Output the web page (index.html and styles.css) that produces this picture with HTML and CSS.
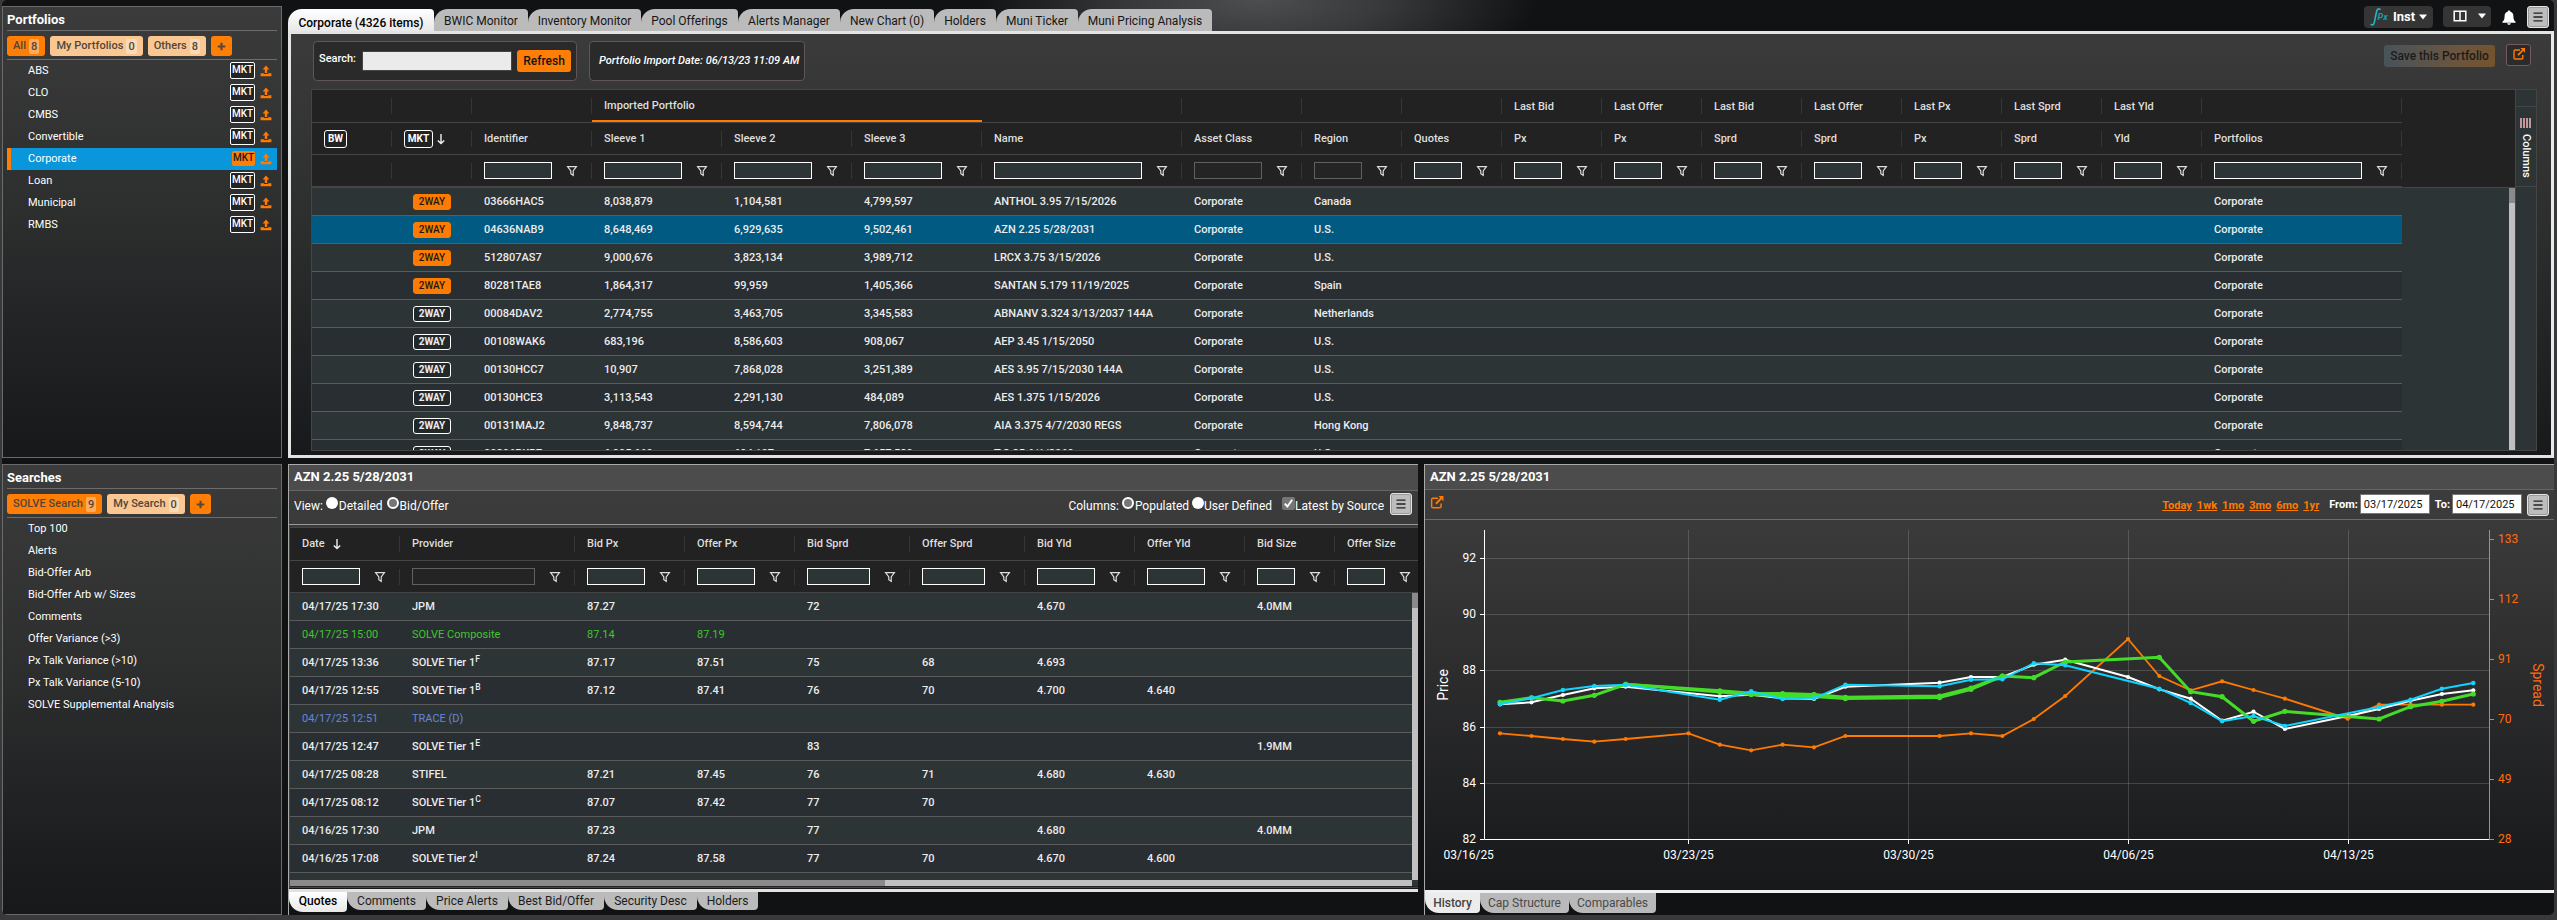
FILE: index.html
```html
<!DOCTYPE html>
<html lang="en">
<head>
<meta charset="utf-8">
<title>Portfolios</title>
<link rel="stylesheet" href="styles.css">
</head>
<body>
<svg class="defs" width="0" height="0">
  <symbol id="funnel" viewBox="0 0 12 12"><path d="M1.6 1.7h8.8L7.2 6v4.4L4.8 8.700V6z" fill="none" stroke="#ddd" stroke-width="1.2"/></symbol>
  <symbol id="upload" viewBox="0 0 12 12"><path d="M6 .6 9.4 4.4H7.2V8H4.8V4.4H2.6z" fill="#ff7a00"/><path d="M.6 8.2h3.3v.9h4.2v-.9h3.3v3H.6z" fill="#ff7a00"/></symbol>
  <symbol id="plus" viewBox="0 0 10 10"><path d="M5 .8v8.4M.8 5h8.4" stroke="#55483a" stroke-width="2.4"/></symbol>
  <symbol id="popout" viewBox="0 0 14 14"><path d="M8 3H3.2Q2 3 2 4.2v6.6Q2 12 3.2 12h6.4q1.2 0 1.2-1.2V8" fill="none" stroke="#ff7a00" stroke-width="1.4"/><path d="M6 8.2 11 3" stroke="#ff7a00" stroke-width="1.8"/><path d="M8.4 1H13v4.8z" fill="#ff7a00"/></symbol>
  <symbol id="lines" viewBox="0 0 22 22"><path d="M6 6.7h10M6 11h10M6 15.3h10" stroke="#222" stroke-width="1.4"/></symbol>
  <symbol id="down" viewBox="0 0 10 12"><path d="M5 1v9.5M1.8 7.4 5 10.6l3.2-3.2" fill="none" stroke="#eee" stroke-width="1.4"/></symbol>
</svg>
<div class="app">
  <aside class="side">
    <section class="box box-top">
      <h2>Portfolios</h2>
      <div class="pills">
        <button class="pill on">All <b>8</b></button><button class="pill">My Portfolios <b>0</b></button><button class="pill">Others <b>8</b></button><button class="pill on add"><svg width="9" height="9"><use href="#plus"/></svg></button>
      </div>
      <ul class="list">
        <li>ABS<span class="mkt">MKT</span><svg width="12" height="12"><use href="#upload"/></svg></li>
        <li>CLO<span class="mkt">MKT</span><svg width="12" height="12"><use href="#upload"/></svg></li>
        <li>CMBS<span class="mkt">MKT</span><svg width="12" height="12"><use href="#upload"/></svg></li>
        <li>Convertible<span class="mkt">MKT</span><svg width="12" height="12"><use href="#upload"/></svg></li>
        <li class="sel">Corporate<span class="mkt">MKT</span><svg width="12" height="12"><use href="#upload"/></svg></li>
        <li>Loan<span class="mkt">MKT</span><svg width="12" height="12"><use href="#upload"/></svg></li>
        <li>Municipal<span class="mkt">MKT</span><svg width="12" height="12"><use href="#upload"/></svg></li>
        <li>RMBS<span class="mkt">MKT</span><svg width="12" height="12"><use href="#upload"/></svg></li>
      </ul>
    </section>
    <section class="box box-bottom">
      <h2>Searches</h2>
      <div class="pills">
        <button class="pill on">SOLVE Search <b>9</b></button><button class="pill">My Search <b>0</b></button><button class="pill on add"><svg width="9" height="9"><use href="#plus"/></svg></button>
      </div>
      <ul class="list">
        <li>Top 100</li><li>Alerts</li><li>Bid-Offer Arb</li><li>Bid-Offer Arb w/ Sizes</li><li>Comments</li><li>Offer Variance (&gt;3)</li><li>Px Talk Variance (&gt;10)</li><li>Px Talk Variance (5-10)</li><li>SOLVE Supplemental Analysis</li>
      </ul>
    </section>
  </aside>
  <main class="main">
    <header class="topbar">
      <nav class="tabs">
        <a class="tab on w146">Corporate (4326 items)</a><a class="tab w94">BWIC Monitor</a><a class="tab w113">Inventory Monitor</a><a class="tab w97">Pool Offerings</a><a class="tab w102">Alerts Manager</a><a class="tab w94">New Chart (0)</a><a class="tab w62">Holders</a><a class="tab w82">Muni Ticker</a><a class="tab w134">Muni Pricing Analysis</a>
      </nav>
      <div class="tools">
        <div class="tool inst">
          <svg width="20" height="22" viewBox="0 0 20 22"><path d="M1.2 18.6c2 .9 2.9-.4 3.4-3.4L6.400 6.200C6.900 3.300 8 2.300 10 3.200" fill="none" stroke="#27b5c4" stroke-width="1.6" stroke-linecap="round"/><text x="7.500" y="14" class="px">Px</text></svg>
          <span>Inst</span>
          <svg width="8" height="6" viewBox="0 0 8 6"><path d="M0 .5h8L4 5.500z" fill="#fff"/></svg>
        </div>
        <div class="tool layout">
          <svg width="14" height="12" viewBox="0 0 14 12"><path d="M1.200 1.200h11.600v9.600H1.200zM7 1v10" fill="none" stroke="#fff" stroke-width="1.500"/></svg>
          <svg width="8" height="6" viewBox="0 0 8 6"><path d="M0 .5h8L4 5.500z" fill="#fff"/></svg>
        </div>
        <svg class="bell" width="14" height="15" viewBox="0 0 14 15"><path d="M7 .4c.8 0 1.200.5 1.200 1.200 2.200.6 3.200 2.300 3.200 4.600 0 3 .8 4.400 2.200 5.600v1H.4v-1c1.400-1.200 2.200-2.600 2.200-5.600 0-2.300 1-4 3.200-4.600C5.800.9 6.200.4 7 .4zM5.200 13.300h3.600c-.2 1-.9 1.500-1.800 1.500s-1.600-.5-1.800-1.500z" fill="#fff"/></svg>
        <button class="menu"><svg width="20" height="20"><use href="#lines"/></svg></button>
      </div>
    </header>
    <section class="port">
      <div class="bar">
        <div class="search"><label>Search:</label><input type="text" aria-label="Search"><button>Refresh</button></div>
        <div class="import">Portfolio Import Date: 06/13/23 11:09 AM</div>
        <button class="save">Save this Portfolio</button>
        <button class="pop"><svg width="14" height="14"><use href="#popout"/></svg></button>
      </div>
      <div class="grid">
        <div class="gmain">
          <div class="ghead">
            <div class="hr hr1 pc"><span></span><span></span><span></span><span class="group">Imported Portfolio</span><span></span><span></span><span></span><span></span><span>Last Bid</span><span>Last Offer</span><span>Last Bid</span><span>Last Offer</span><span>Last Px</span><span>Last Sprd</span><span>Last Yld</span><span></span></div>
            <div class="hr pc"><span><i class="chip bw">BW</i></span><span><i class="chip">MKT</i><svg class="arrow" width="10" height="12"><use href="#down"/></svg></span><span>Identifier</span><span>Sleeve 1</span><span>Sleeve 2</span><span>Sleeve 3</span><span>Name</span><span>Asset Class</span><span>Region</span><span>Quotes</span><span>Px</span><span>Px</span><span>Sprd</span><span>Sprd</span><span>Px</span><span>Sprd</span><span>Yld</span><span>Portfolios</span></div>
            <div class="hr pc"><span></span><span></span><span><i class="in"></i><svg width="12" height="12"><use href="#funnel"/></svg></span><span><i class="in"></i><svg width="12" height="12"><use href="#funnel"/></svg></span><span><i class="in"></i><svg width="12" height="12"><use href="#funnel"/></svg></span><span><i class="in"></i><svg width="12" height="12"><use href="#funnel"/></svg></span><span><i class="in"></i><svg width="12" height="12"><use href="#funnel"/></svg></span><span><i class="in off"></i><svg width="12" height="12"><use href="#funnel"/></svg></span><span><i class="in off"></i><svg width="12" height="12"><use href="#funnel"/></svg></span><span><i class="in"></i><svg width="12" height="12"><use href="#funnel"/></svg></span><span><i class="in"></i><svg width="12" height="12"><use href="#funnel"/></svg></span><span><i class="in"></i><svg width="12" height="12"><use href="#funnel"/></svg></span><span><i class="in"></i><svg width="12" height="12"><use href="#funnel"/></svg></span><span><i class="in"></i><svg width="12" height="12"><use href="#funnel"/></svg></span><span><i class="in"></i><svg width="12" height="12"><use href="#funnel"/></svg></span><span><i class="in"></i><svg width="12" height="12"><use href="#funnel"/></svg></span><span><i class="in"></i><svg width="12" height="12"><use href="#funnel"/></svg></span><span><i class="in"></i><svg width="12" height="12"><use href="#funnel"/></svg></span></div>
          </div>
          <div class="gbody">
            <div class="rows">
              <div class="row pc"><span class="way hot"><i>2WAY</i></span><span>03666HAC5</span><span>8,038,879</span><span>1,104,581</span><span>4,799,597</span><span>ANTHOL 3.95 7/15/2026</span><span>Corporate</span><span>Canada</span><span class="last">Corporate</span></div>
              <div class="row pc sel"><span class="way hot"><i>2WAY</i></span><span>04636NAB9</span><span>8,648,469</span><span>6,929,635</span><span>9,502,461</span><span>AZN 2.25 5/28/2031</span><span>Corporate</span><span>U.S.</span><span class="last">Corporate</span></div>
              <div class="row pc"><span class="way hot"><i>2WAY</i></span><span>512807AS7</span><span>9,000,676</span><span>3,823,134</span><span>3,989,712</span><span>LRCX 3.75 3/15/2026</span><span>Corporate</span><span>U.S.</span><span class="last">Corporate</span></div>
              <div class="row pc"><span class="way hot"><i>2WAY</i></span><span>80281TAE8</span><span>1,864,317</span><span>99,959</span><span>1,405,366</span><span>SANTAN 5.179 11/19/2025</span><span>Corporate</span><span>Spain</span><span class="last">Corporate</span></div>
              <div class="row pc"><span class="way"><i>2WAY</i></span><span>00084DAV2</span><span>2,774,755</span><span>3,463,705</span><span>3,345,583</span><span>ABNANV 3.324 3/13/2037 144A</span><span>Corporate</span><span>Netherlands</span><span class="last">Corporate</span></div>
              <div class="row pc"><span class="way"><i>2WAY</i></span><span>00108WAK6</span><span>683,196</span><span>8,586,603</span><span>908,067</span><span>AEP 3.45 1/15/2050</span><span>Corporate</span><span>U.S.</span><span class="last">Corporate</span></div>
              <div class="row pc"><span class="way"><i>2WAY</i></span><span>00130HCC7</span><span>10,907</span><span>7,868,028</span><span>3,251,389</span><span>AES 3.95 7/15/2030 144A</span><span>Corporate</span><span>U.S.</span><span class="last">Corporate</span></div>
              <div class="row pc"><span class="way"><i>2WAY</i></span><span>00130HCE3</span><span>3,113,543</span><span>2,291,130</span><span>484,089</span><span>AES 1.375 1/15/2026</span><span>Corporate</span><span>U.S.</span><span class="last">Corporate</span></div>
              <div class="row pc"><span class="way"><i>2WAY</i></span><span>00131MAJ2</span><span>9,848,737</span><span>8,594,744</span><span>7,806,078</span><span>AIA 3.375 4/7/2030 REGS</span><span>Corporate</span><span>Hong Kong</span><span class="last">Corporate</span></div>
              <div class="row pc"><span class="way"><i>2WAY</i></span><span>00206RKB7</span><span>6,995,660</span><span>694,107</span><span>7,657,580</span><span>T 3.85 6/1/2060</span><span>Corporate</span><span>U.S.</span><span class="last">Corporate</span></div>
            </div>
            <div class="vscroll"></div>
          </div>
        </div>
        <div class="gside">
          <div class="colbtn"><svg width="11" height="10" viewBox="0 0 11 10"><path d="M1 0v10M4 0v10M7 0v10M10 0v10" stroke="#f2b8be" stroke-width="1.500"/></svg><span>Columns</span></div>
        </div>
      </div>
    </section>
    <div class="lower">
      <section class="pane quotes">
        <div class="inner">
          <h3>AZN 2.25 5/28/2031</h3>
          <div class="view">
            <span class="t1">View:</span><i class="radio"></i>Detailed<i class="radio chk g4"></i>Bid/Offer
            <span class="cols">Columns:</span><i class="radio chk"></i>Populated<i class="radio g2"></i>User Defined<i class="check"><svg width="11" height="11" viewBox="0 0 11 11"><path d="M1.800 5.600 4.400 8.500 9.200 1.800" fill="none" stroke="#fff" stroke-width="1.900"/></svg></i>Latest by Source<button class="menu"><svg width="20" height="20"><use href="#lines"/></svg></button>
          </div>
          <div class="qgrid">
            <div class="hr qc h33"><span>Date<svg class="arrow a2" width="10" height="12"><use href="#down"/></svg></span><span>Provider</span><span>Bid Px</span><span>Offer Px</span><span>Bid Sprd</span><span>Offer Sprd</span><span>Bid Yld</span><span>Offer Yld</span><span>Bid Size</span><span>Offer Size</span></div>
            <div class="hr qc"><span><i class="in"></i><svg width="12" height="12"><use href="#funnel"/></svg></span><span><i class="in off"></i><svg width="12" height="12"><use href="#funnel"/></svg></span><span><i class="in"></i><svg width="12" height="12"><use href="#funnel"/></svg></span><span><i class="in"></i><svg width="12" height="12"><use href="#funnel"/></svg></span><span><i class="in"></i><svg width="12" height="12"><use href="#funnel"/></svg></span><span><i class="in"></i><svg width="12" height="12"><use href="#funnel"/></svg></span><span><i class="in"></i><svg width="12" height="12"><use href="#funnel"/></svg></span><span><i class="in"></i><svg width="12" height="12"><use href="#funnel"/></svg></span><span><i class="in"></i><svg width="12" height="12"><use href="#funnel"/></svg></span><span><i class="in"></i><svg width="12" height="12"><use href="#funnel"/></svg></span></div>
            <div class="qbody">
              <div class="rows">
                <div class="row qc"><span>04/17/25 17:30</span><span>JPM</span><span>87.27</span><span></span><span>72</span><span></span><span>4.670</span><span></span><span>4.0MM</span><span></span></div>
                <div class="row qc green"><span>04/17/25 15:00</span><span>SOLVE Composite</span><span>87.14</span><span>87.19</span></div>
                <div class="row qc"><span>04/17/25 13:36</span><span>SOLVE Tier 1<sup>F</sup></span><span>87.17</span><span>87.51</span><span>75</span><span>68</span><span>4.693</span></div>
                <div class="row qc"><span>04/17/25 12:55</span><span>SOLVE Tier 1<sup>B</sup></span><span>87.12</span><span>87.41</span><span>76</span><span>70</span><span>4.700</span><span>4.640</span></div>
                <div class="row qc blue"><span>04/17/25 12:51</span><span>TRACE (D)</span></div>
                <div class="row qc"><span>04/17/25 12:47</span><span>SOLVE Tier 1<sup>E</sup></span><span></span><span></span><span>83</span><span></span><span></span><span></span><span>1.9MM</span></div>
                <div class="row qc"><span>04/17/25 08:28</span><span>STIFEL</span><span>87.21</span><span>87.45</span><span>76</span><span>71</span><span>4.680</span><span>4.630</span></div>
                <div class="row qc"><span>04/17/25 08:12</span><span>SOLVE Tier 1<sup>C</sup></span><span>87.07</span><span>87.42</span><span>77</span><span>70</span></div>
                <div class="row qc"><span>04/16/25 17:30</span><span>JPM</span><span>87.23</span><span></span><span>77</span><span></span><span>4.680</span><span></span><span>4.0MM</span></div>
                <div class="row qc"><span>04/16/25 17:08</span><span>SOLVE Tier 2<sup>I</sup></span><span>87.24</span><span>87.58</span><span>77</span><span>70</span><span>4.670</span><span>4.600</span></div>
                <div class="row qc"></div>
              </div>
              <div class="vscroll"></div>
            </div>
            <div class="hscroll"><i></i></div>
          </div>
        </div>
        <nav class="btabs"><a class="on w58">Quotes</a><a class="w79">Comments</a><a class="w82">Price Alerts</a><a class="w96">Best Bid/Offer</a><a class="w93">Security Desc</a><a class="w61">Holders</a></nav>
      </section>
      <section class="pane chart">
        <div class="inner">
          <h3>AZN 2.25 5/28/2031</h3>
          <div class="ctools">
            <svg width="16" height="15" viewBox="0 0 14 14"><use href="#popout"/></svg>
            <div class="links"><a>Today</a><a>1wk</a><a>1mo</a><a>3mo</a><a>6mo</a><a>1yr</a></div>
            <label>From:</label><span class="date">03/17/2025</span><label class="to">To:</label><span class="date">04/17/2025</span>
            <button class="menu"><svg width="20" height="20"><use href="#lines"/></svg></button>
          </div>
          <svg class="plot" width="1129" height="370" viewBox="1425 520 1129 370">
            <defs>
              <marker id="mw" markerUnits="userSpaceOnUse" markerWidth="6" markerHeight="6" refX="3" refY="3"><circle cx="3" cy="3" r="2.100" fill="#fff"/></marker>
              <marker id="mo" markerUnits="userSpaceOnUse" markerWidth="6" markerHeight="6" refX="3" refY="3"><circle cx="3" cy="3" r="2.100" fill="#ff7a00"/></marker>
              <marker id="mb" markerUnits="userSpaceOnUse" markerWidth="6" markerHeight="6" refX="3" refY="3"><circle cx="3" cy="3" r="2.200" fill="#0fd5ff"/></marker>
              <marker id="mg" markerUnits="userSpaceOnUse" markerWidth="6" markerHeight="6" refX="3" refY="3"><circle cx="3" cy="3" r="2.600" fill="#44dc28"/></marker>
            </defs>
            <path class="gl" d="M1485 558.500H2489M1485 614.500H2489M1485 670.500H2489M1485 727.500H2489M1485 783.500H2489M1688.500 530V839M1908.500 530V839M2128.500 530V839M2348.500 530V839"/>
            <path class="ax" d="M1484.500 530V839.500H2489M1480 558.500h4M1480 614.500h4M1480 670.500h4M1480 727.500h4M1480 783.500h4M1480 839.500h4M1688.500 839v5M1908.500 839v5M2128.500 839v5M2348.500 839v5"/>
            <path class="ax2" d="M2489.500 530V839.500M2489 539.500h5M2489 599.500h5M2489 659.500h5M2489 719.500h5M2489 779.500h5M2489 839.500h5"/>
            <g class="yl"><text x="1476" y="562">92</text><text x="1476" y="618">90</text><text x="1476" y="674">88</text><text x="1476" y="731">86</text><text x="1476" y="787">84</text><text x="1476" y="843">82</text></g>
            <g class="xl"><text x="1468.700" y="859">03/16/25</text><text x="1688.500" y="859">03/23/25</text><text x="1908.500" y="859">03/30/25</text><text x="2128.500" y="859">04/06/25</text><text x="2348.500" y="859">04/13/25</text></g>
            <g class="rl"><text x="2498" y="543">133</text><text x="2498" y="603">112</text><text x="2498" y="663">91</text><text x="2498" y="723">70</text><text x="2498" y="783">49</text><text x="2498" y="843">28</text></g>
            <text class="ttl" transform="translate(1448 685) rotate(-90)">Price</text>
            <text class="ttl or" transform="translate(2533 685) rotate(90)">Spread</text>
            <polyline class="s or" points="1500,733.3 1531.500,736 1562.900,739 1594.300,741.700 1625.700,739 1688.500,733.300 1719.800,744.700 1751.200,750.300 1782.600,744.700 1814,747.300 1845.400,736 1939.600,736 1971,733.300 2002.400,736 2033.800,719 2065.200,696 2128,639 2159.300,676 2190.700,690.300 2222.100,681.300 2253.500,690 2284.900,698.700 2347.700,718.700 2379.100,704.700 2410.500,704.700 2441.900,704.700 2473.300,704.700"/>
            <polyline class="s wh" points="1500,704.300 1531.500,702.300 1562.900,695 1594.300,688.300 1625.700,686.700 1719.800,696.300 1751.200,694.700 1782.600,698.300 1814,699 1845.400,686.700 1939.600,682.700 1971,677 2002.400,677 2033.800,664.700 2065.200,659.700 2128,677 2159.300,689.300 2190.700,698.700 2222.100,720.700 2253.500,711.700 2284.900,729 2347.700,716 2379.100,709 2410.500,700.700 2441.900,694 2473.300,690.300"/>
            <polyline class="s gr" points="1500,702.300 1531.500,697.700 1562.900,701 1594.300,695.300 1625.700,684.300 1719.800,690.800 1751.200,693.300 1782.600,693.600 1814,694.500 1845.400,697.300 1939.600,696 1971,688 2002.400,676 2033.800,677.700 2065.200,662 2159.300,657.300 2190.700,691.700 2222.100,696.700 2253.500,721.300 2284.900,711.300 2379.100,719 2410.500,706.700 2441.900,701.300 2473.300,694"/>
            <polyline class="s gr" points="1625.700,684.300 1719.800,692 1751.200,694.600 1782.600,695.800 1814,696.500 1845.400,698.600 1939.600,697.600 1971,689.300 2002.400,676"/>
            <polyline class="s bl" points="1500,704.300 1531.500,698.300 1562.900,690 1594.300,686 1625.700,684.700 1719.800,699.700 1751.200,691.300 1782.600,699 1814,698.300 1845.400,684.700 1939.600,686.300 1971,679.700 2002.400,679.300 2033.800,663.300 2065.200,665.300 2159.300,688.700 2190.700,703 2222.100,721.300 2253.500,716 2284.900,726 2379.100,707 2410.500,699.700 2441.900,688.700 2473.300,683"/>
          </svg>
        </div>
        <nav class="btabs dim"><a class="on w55">History</a><a class="w89">Cap Structure</a><a class="w87">Comparables</a></nav>
      </section>
    </div>
  </main>
</div>
</body>
</html>
```
FILE: styles.css
```css
* { box-sizing: border-box; margin: 0; padding: 0; }
html, body { width: 2557px; height: 920px; overflow: hidden; }
body { background: #39393b; font: 11px/14px Roboto, "Liberation Sans", sans-serif; color: #fff; }
button { border: 0; font: inherit; color: inherit; }
svg { display: block; flex: none; }
.defs { display: none; }
i { font-style: normal; }

.app {
  display: flex; gap: 6px; width: 2552px; height: 915px; margin-left: 2px;
  border-radius: 5px; overflow: hidden;
  background: radial-gradient(ellipse 280px 90px at 1255px 0, #4d4e50 0, #38393b 45%, #111214 100%) #111214;
}

/* left column */
.side { display: flex; flex-direction: column; gap: 6px; width: 280px; padding-top: 6px; }
.box { border: 1px solid #6b6b6b; padding: 0 4px; background: linear-gradient(#3b3b3b, #2d2e2e 45%, #17181a); }
.box-top { height: 452px; }
.box-bottom { height: 451px; }
.box h2 { height: 24px; padding-top: 6px; font-size: 13px; line-height: 14px; border-bottom: 1px solid #6c6c6c; }
.pills { display: flex; gap: 5px; height: 29px; padding-top: 5px; border-bottom: 1px solid #6c6c6c; }
.pill { display: flex; align-items: center; gap: 3px; height: 20px; padding: 0 6px; border-radius: 3px; background: #fac792; color: #4f463c; font-weight: 500; letter-spacing: .05px; }
.pill.on { background: #ff7e06; }
.pill b { font-weight: 500; background: rgba(255, 255, 255, .35); border-radius: 2px; padding: 0 2px; line-height: 15px; }
.pill.add { padding: 0 6px; }
.list { list-style: none; }
.list li { display: flex; align-items: center; height: 22px; padding: 0 5px 0 21px; }
.list svg { margin: 0 0 1px 5px; }
.mkt { margin: 0 0 1px auto; height: 17px; width: 25px; border: 1px solid #fff; border-radius: 2px; background: #222425; font-size: 10px; line-height: 14px; font-weight: 500; text-align: center; }
.list .sel { background: #0a96da; border-left: 4px solid #ff7e06; padding-left: 17px; }
.sel .mkt { background: #ff7e06; color: #1b1b1b; height: 15px; width: 23px; border: 0; }

/* top bar */
.main { display: flex; flex-direction: column; width: 2266px; }
.topbar { display: flex; justify-content: space-between; height: 31px; }
.tabs { display: flex; padding-top: 9px; }
.tab { height: 22px; background: #bbb; color: #161616; font-size: 12px; line-height: 24px; text-align: center; border-radius: 14px 4px 0 0; }
.tab.on { background: linear-gradient(#fff, #e8e8e8); color: #000; font-weight: 500; line-height: 28px; }
.w146 { width: 146px; } .w94 { width: 94px; } .w113 { width: 113px; } .w97 { width: 97px; } .w102 { width: 102px; }
.w62 { width: 62px; } .w82 { width: 82px; } .w134 { width: 134px; } .w58 { width: 58px; } .w79 { width: 79px; }
.w96 { width: 96px; } .w93 { width: 93px; } .w61 { width: 61px; } .w55 { width: 55px; } .w89 { width: 89px; } .w87 { width: 87px; }
.tools { display: flex; padding: 6px 5px 0 0; }
.tool { display: flex; align-items: center; height: 22px; background: #353536; border-radius: 4px; }
.inst { width: 69px; padding-left: 6px; font-size: 13px; font-weight: 700; }
.inst span { margin: 0 4px 0 3px; }
.inst svg:last-child { margin-bottom: 1px; }
.px { font: italic 700 9px Roboto, sans-serif; fill: #1d9bab; }
.layout { width: 48px; height: 21px; margin-left: 10px; padding-left: 10px; gap: 11px; }
.layout svg { margin-bottom: 2px; }
.bell { margin: 4px 0 0 11px; }
.menu { width: 22px; height: 22px; border: 1px solid #e4e4e4; border-radius: 3px; background: #bdbdbd; box-shadow: inset 0 0 0 1px #9a9a9a; }
.tools .menu { margin-left: 11px; }

/* portfolio panel */
.port { height: 427px; border: 3px solid #e3e5e2; border-right-color: #e9e9e9; border-bottom-color: #e5e0e4; background: linear-gradient(#3b3b3b, #2b2c2c 50%, #18191b); padding: 7px 0 0 20px; }
.bar { display: flex; height: 48px; padding-left: 2px; }
.search { display: flex; width: 264px; height: 40px; padding: 9px 5px 0; border: 1px solid #5f5557; border-radius: 4px; background: #2a2a2a; font-weight: 500; }
.search label { width: 43px; padding-top: 1px; }
.search input { width: 150px; height: 20px; border: 1px solid #444; background: #ebebeb; }
.search button { width: 54px; height: 22px; margin: -1px 0 0 5px; border-radius: 3px; background: #ff7e06; color: #141414; font-size: 12px; }
.import { width: 216px; height: 40px; margin-left: 12px; border: 1px solid #5f5557; border-radius: 4px; background: #2a2a2a; padding-left: 9px; font-style: italic; font-weight: 500; line-height: 38px; }
.save { width: 111px; height: 22px; margin: 4px 0 0 auto; border-radius: 3px; background: linear-gradient(90deg, #48535a, #6b553f 65%, #74542f); color: #1b1b1b; font-size: 12px; font-weight: 500; }
.pop { display: flex; justify-content: center; width: 25px; height: 22px; margin: 3px 20px 0 11px; padding-top: 2px; border: 1px solid #75585c; border-radius: 3px; background: #2b2b2b; }

/* grids */
.grid { display: flex; width: 2226px; height: 362px; border: 1px solid #454545; background: #2d3436; }
.gmain { display: flex; flex-direction: column; width: 2203px; }
.ghead { flex: none; height: 98px; background: #222; border-bottom: 1px solid #454545; }
.hr { display: grid; align-items: center; height: 32px; border-bottom: 1px solid #454545; background: #222; color: #dedede; font-weight: 500; }
.ghead .hr { width: 2090px; }
.pc { grid-template-columns: 80px 80px 120px 130px 130px 130px 200px 120px repeat(9, 100px) 200px; }
.hr > span { display: flex; align-items: center; height: 16px; padding-left: 12px; border-right: 1px solid #363636; }
.ghead .hr1 { height: 33px; }
.hr1 > span { padding-top: 1px; }
.hr1 .group { grid-column: span 3; height: 32px; border-bottom: 2px solid #ff7a00; border-right: 0; }
.hr span svg { margin: 0 13px 0 auto; }
.hr span svg.arrow { margin: 0 0 0 3px; }
.hr span svg.a2 { margin-left: 7px; }
.in { flex: none; height: 17px; border: 1px solid #fff; background: #2d3436; width: calc(100% - 39px); }
.in.off { background: #242424; border-color: #606060; }
.chip { width: 29px; height: 18px; border: 1px solid #fff; border-radius: 3px; font-size: 10px; line-height: 16px; color: #fff; font-weight: 700; text-align: center; }
.chip.bw { width: 23px; }
.gbody { display: flex; flex: 1; min-height: 0; overflow: hidden; background: #2d3436; }
.gbody .rows { width: 2090px; margin-right: 107px; }
.row { display: grid; height: 28px; border-bottom: 1px solid #5b5b5b; background: #2d3436; color: #ececec; line-height: 28px; font-weight: 500; }
.row:nth-child(even) { background: #292e33; }
.row.sel { background: #005a82; }
.row > span { height: 27px; padding-left: 12px; white-space: nowrap; }
.row .way { grid-column: 2; padding: 6px 0 0 21px; }
.way i { display: block; width: 38px; height: 16px; border: 1px solid #fff; border-radius: 3px; font-size: 10px; font-weight: 700; line-height: 14px; text-align: center; background: #22282a; }
.way.hot i { border-color: #ff7a00; background: #ff7a00; color: #1a1a1a; font-weight: 500; }
.row .last { grid-column: 18; }
.vscroll { flex: none; width: 6px; background: linear-gradient(#8a8a8a 15px, #c0c0c0 15px); }
.gside { width: 21px; border-left: 1px solid #454545; background: #2d3436; }
.colbtn { height: 81px; margin-top: 16px; border: solid #454545; border-width: 1px 0; padding-top: 11px; }
.colbtn svg { margin-left: 4px; }
.colbtn span { display: block; writing-mode: vertical-rl; margin: 6px 0 0 3px; font-weight: 500; font-size: 11px; line-height: 14px; }

/* lower panes */
.lower { display: flex; gap: 6px; margin-top: 6px; height: 451px; }
.pane { width: 1130px; border-left: 1px solid #aaa; }
.inner { border-top: 1px solid #aaa; border-bottom: 3px solid #e5e0e4; background: linear-gradient(#3d3d3d, #3a3a3a 15%, #17181a); overflow: hidden; }
.pane h3 { height: 26px; padding: 4px 0 0 5px; border-bottom: 1px solid #666; background: #4c4c4c; font-size: 13px; line-height: 15px; font-weight: 700; }
.quotes .inner { height: 428px; }
.view { display: flex; height: 34px; padding: 0 6px 0 5px; border-bottom: 1px solid #999; font-size: 12px; line-height: 30px; }
.radio { width: 12px; height: 12px; margin: 6px 1px 0 3px; border-radius: 50%; background: #fff; }
.radio.chk { background: #767676; border: 2px solid #fff; }
.radio.g4 { margin-left: 4px; }
.radio.g2 { margin: 6px 0 0 3px; }
.cols { margin-left: auto; }
.check { display: flex; align-items: center; justify-content: center; width: 13px; height: 13px; margin: 6px 0 0 10px; border-radius: 2px; background: #767676; }
.view .menu { margin: 2px 0 0 6px; }
.qgrid { margin-top: 2px; border: 1px solid #454545; border-right: 0; height: 361px; background: #222; overflow: hidden; }
.qc { grid-template-columns: 110px 175px 110px 110px 115px 115px 110px 110px 90px 90px; }
.qgrid .h33 { height: 33px; }
.qbody { display: flex; height: 287px; overflow: hidden; background: #2d3436; }
.qbody .rows { width: 1122px; overflow: hidden; }
.row sup { font-size: 8.5px; line-height: 0; vertical-align: 4px; }
.row.green { color: #3fc72b; font-weight: 400; }
.row.blue { color: #6487dd; font-weight: 400; }
.hscroll { height: 6px; padding-left: 595px; background: #8a8a8a; border-right: 6px solid #2d3436; }
.hscroll i { display: block; height: 6px; background: #c0c0c0; }
.btabs { display: flex; font-size: 12px; color: #1b1b1b; text-align: center; line-height: 18px; }
.btabs a { height: 18px; background: #bbb; border-radius: 0 0 4px 14px; }
.btabs .on { height: 20px; background: linear-gradient(#fff, #e8e8e8); color: #000; font-weight: 500; }
.dim { color: #4a4a4a; line-height: 20px; }
.dim a { height: 20px; background: #b9b9b9; }
.dim .on { background: #ececec; color: #444; }

/* chart */
.chart .inner { height: 429px; border-bottom-color: #f0f0f0; }
.chart h3 { height: 25px; }
.ctools { display: flex; height: 30px; padding: 4px 5px 0 4px; border-bottom: 1px solid #6c6c6c; font-weight: 700; }
.ctools > svg { margin-top: 1px; }
.links { display: flex; gap: 5px; margin: 5px 10px 0 auto; color: #ff7a00; }
.links a { text-decoration: underline; }
.ctools label { margin: 4px 2px 0 0; }
.ctools .to { margin-left: 5px; }
.date { width: 70px; height: 20px; border: 1px solid #767676; background: #fff; color: #111; font-weight: 400; line-height: 19px; padding-left: 3px; }
.ctools .menu { margin-left: 5px; }
.gl { stroke: rgba(255, 255, 255, .16); fill: none; }
.ax { stroke: #fff; fill: none; }
.ax2 { stroke: #ff7a00; fill: none; }
.plot text { font-size: 12px; fill: #fff; }
.yl text { text-anchor: end; }
.xl text { text-anchor: middle; }
.plot .rl text, .plot text.or { fill: #ff6d0a; }
.plot text.ttl { text-anchor: middle; font-size: 14px; }
.s { fill: none; stroke-width: 2; }
.s.or { stroke: #ff7a00; marker: url(#mo); stroke-width: 1.8; }
.s.wh { stroke: #fff; marker: url(#mw); }
.s.bl { stroke: #0fd5ff; marker: url(#mb); }
.s.gr { stroke: #44dc28; marker: url(#mg); stroke-width: 3; }
```
